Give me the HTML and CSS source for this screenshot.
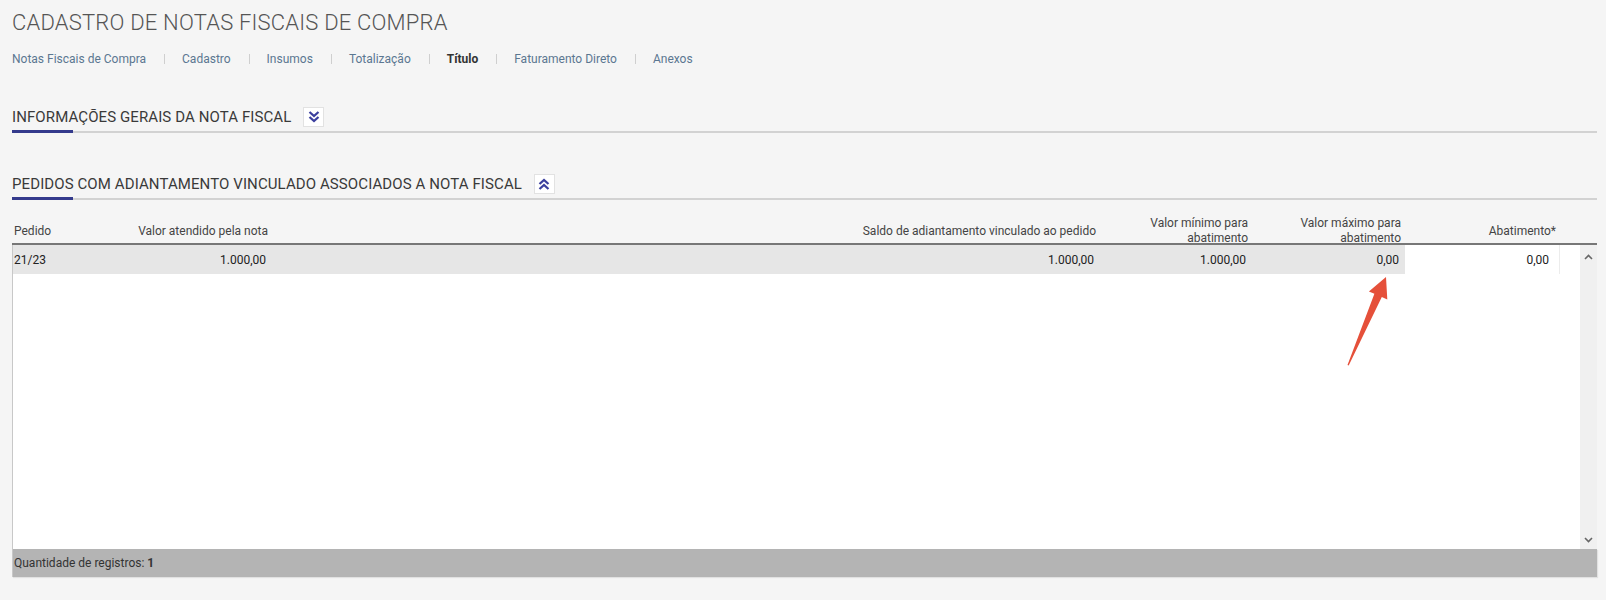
FILE: index.html
```html
<!DOCTYPE html>
<html lang="pt-BR">
<head>
    <meta charset="UTF-8">
    <title>Cadastro de Notas Fiscais de Compra</title>
    <link rel="stylesheet" href="styles.css">
</head>
<body>
    <h1 class="page-title">CADASTRO DE NOTAS FISCAIS DE COMPRA</h1>
    <nav class="tabs">
        <a href="#">Notas Fiscais de Compra</a><span class="sep"></span>
        <a href="#">Cadastro</a><span class="sep"></span>
        <a href="#">Insumos</a><span class="sep"></span>
        <a href="#">Totalização</a><span class="sep"></span>
        <a href="#" class="active">Título</a><span class="sep"></span>
        <a href="#">Faturamento Direto</a><span class="sep"></span>
        <a href="#">Anexos</a>
    </nav>

    <div class="section-head first">
        <span class="section-title">INFORMAÇÕES GERAIS DA NOTA FISCAL</span>
        <button class="toggle">
            <svg width="14" height="14" viewBox="0 0 14 14"><path d="M2.5 2 L7 6 L11.5 2 M2.5 7 L7 11 L11.5 7" fill="none" stroke="#3b3f9e" stroke-width="2.3"/></svg>
        </button>
    </div>

    <div class="section-head">
        <span class="section-title">PEDIDOS COM ADIANTAMENTO VINCULADO ASSOCIADOS A NOTA FISCAL</span>
        <button class="toggle">
            <svg width="14" height="14" viewBox="0 0 14 14"><path d="M2.5 7 L7 3 L11.5 7 M2.5 12 L7 8 L11.5 12" fill="none" stroke="#3b3f9e" stroke-width="2.3"/></svg>
        </button>
    </div>

    <div class="grid">
        <div class="grid-head">
            <div class="hcell left">Pedido</div>
            <div class="hcell">Valor atendido pela nota</div>
            <div class="hcell">Saldo de adiantamento vinculado ao pedido</div>
            <div class="hcell">Valor mínimo para<br>abatimento</div>
            <div class="hcell">Valor máximo para<br>abatimento</div>
            <div class="hcell">Abatimento*</div>
            <div class="hcell"></div>
        </div>
        <div class="grid-body">
            <div class="grid-rows">
                <div class="grid-row">
                    <div class="cell left">21/23</div>
                    <div class="cell">1.000,00</div>
                    <div class="cell">1.000,00</div>
                    <div class="cell">1.000,00</div>
                    <div class="cell">0,00</div>
                    <div class="cell input">0,00</div>
                    <div class="cell blank"></div>
                </div>
            </div>
            <div class="scrollbar">
                <svg width="9" height="6" viewBox="0 0 9 6"><path d="M1 5 L4.5 1.5 L8 5" fill="none" stroke="#666" stroke-width="1.6"/></svg>
                <svg width="9" height="6" viewBox="0 0 9 6"><path d="M1 1 L4.5 4.5 L8 1" fill="none" stroke="#666" stroke-width="1.6"/></svg>
            </div>
        </div>
        <div class="grid-foot">Quantidade de registros: <b>1</b></div>
    </div>

    <!-- annotation arrow pointing at the max value -->
    <svg class="note-arrow" width="60" height="100" viewBox="0 0 60 100">
        <polygon points="7.5,95 34.4,23.8 28.9,21.4 46,7 47.3,29.4 41.8,27 8.7,95.5" fill="#e5503a"/>
    </svg>
</body>
</html>
```

FILE: styles.css
```css
body { margin: 0; padding: 0 9px 0 12px; background: #f5f5f5; font-family: Roboto, "Liberation Sans", sans-serif; color: #333; height: 600px; box-sizing: border-box; }
.page-title { margin: 0; padding-top: 10px; font-size: 22px; line-height: 26px; font-weight: 300; letter-spacing: 0.2px; color: #555; }
.tabs { display: flex; align-items: center; margin-top: 15px; font-size: 12px; line-height: 16px; }
.tabs a { color: #5b7791; text-decoration: none; }
.tabs a.active { color: #333; font-weight: bold; }
.tabs .sep { display: inline-block; height: 10px; border-left: 1px solid #cfcfcf; margin: 0 17px 0 18px; }
.section-head { position: relative; display: flex; align-items: center; margin-top: 41px; padding-bottom: 4px; border-bottom: 2px solid #d2d2d2; }
.section-head.first { margin-top: 40px; }
.section-head::after { content: ''; position: absolute; left: 0; bottom: -2px; width: 61px; height: 3px; background: #343a8c; }
.section-title { font-size: 15px; line-height: 20px; letter-spacing: 0.1px; color: #3a3a3a; }
.toggle { width: 21px; height: 20px; margin-left: 12px; padding: 0; border: 1px solid #e2e2e2; background: #fff; display: flex; align-items: center; justify-content: center; cursor: pointer; }
.grid { font-size: 12px; color: #333; }
.grid-head { display: grid; grid-template-columns: 98px 162px 828px 152px 153px 155px 37px; height: 43px; border-bottom: 2px solid #777; }
.hcell { display: flex; align-items: center; justify-content: flex-end; text-align: right; padding: 16px 4px 0 0; line-height: 15px; color: #444; }
.hcell.left { justify-content: flex-start; padding-left: 2px; }
.grid-body { display: flex; height: 304px; background: #fff; border-left: 1px solid #c8c8c8; }
.grid-rows { flex: 1; }
.grid-row { display: grid; grid-template-columns: 97px 162px 828px 152px 153px 155px 20px; height: 29px; background: #e6e6e6; }
.cell { display: flex; align-items: center; justify-content: flex-end; padding-right: 6px; color: #222; }
.cell.left { justify-content: flex-start; padding-left: 1px; }
.cell.input { background: #fff; padding-right: 10px; border-right: 1px solid #ececec; }
.cell.blank { background: #fff; }
.scrollbar { width: 17px; background: #f0f0f0; display: flex; flex-direction: column; align-items: center; justify-content: space-between; padding: 9px 0 6px; box-sizing: border-box; }
.grid-foot { height: 28px; line-height: 28px; background: #b4b4b4; border-left: 1px solid #c8c8c8; padding-left: 1px; color: #333; box-shadow: 1px 1px 1px rgba(0,0,0,0.08); }
.note-arrow { position: absolute; left: 1340px; top: 270px; }
```
